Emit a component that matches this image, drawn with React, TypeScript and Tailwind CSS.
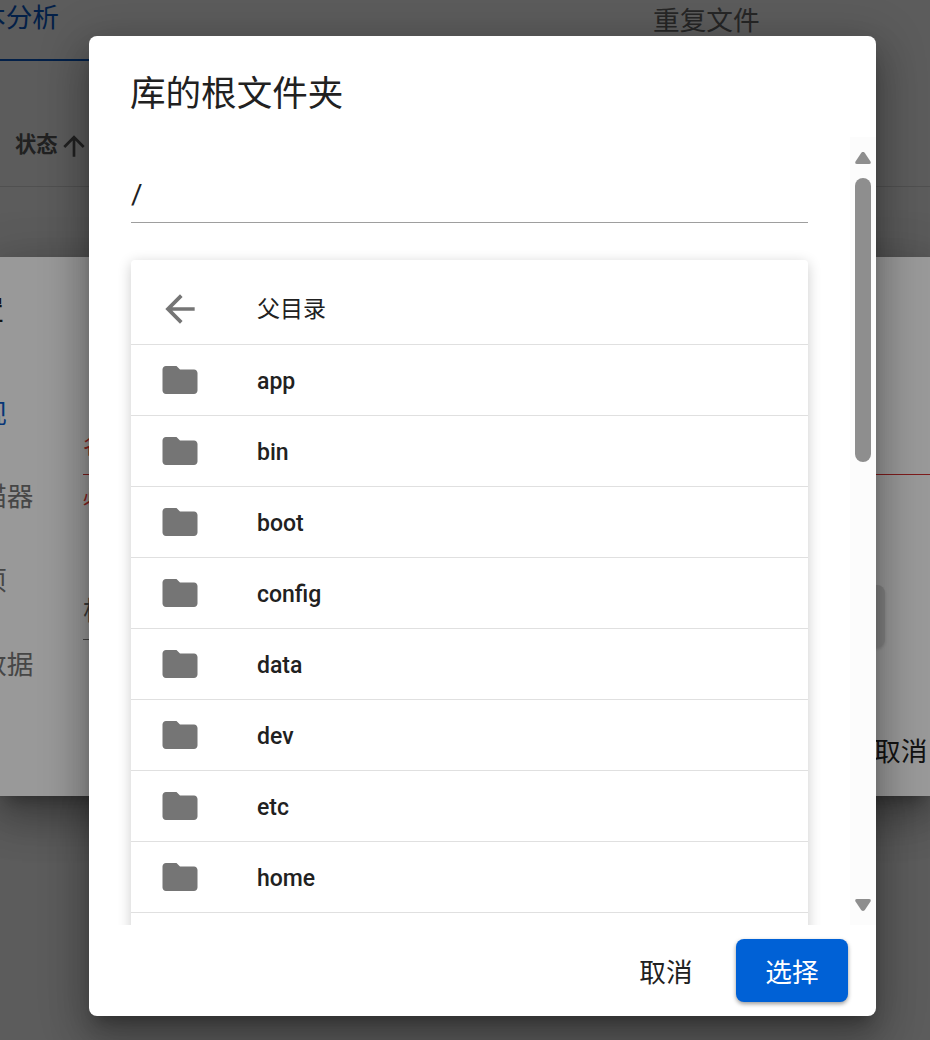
import React from "react";

const FONT = "font-['Roboto','Noto_Sans_CJK_SC',sans-serif]";

function Folder() {
  return (
    <svg width="42" height="42" viewBox="0 0 24 24" fill="#757575">
      <path d="M10 4H4c-1.100 0-2 .9-2 2v12c0 1.100.9 2 2 2h16c1.100 0 2-.9 2-2V8c0-1.100-.9-2-2-2h-8l-2-2z" />
    </svg>
  );
}

function Back() {
  return (
    <svg width="44" height="44" viewBox="0 0 24 24" fill="#757575">
      <path d="M20 11H7.830l5.590-5.590L12 4l-8 8 8 8 1.410-1.410L7.830 13H20v-2z" />
    </svg>
  );
}

const dirs = ["app", "bin", "boot", "config", "data", "dev", "etc", "home", "lib"];
const SHADOW = "shadow-[0_11px_15px_-7px_rgba(0,0,0,0.28),0_24px_38px_3px_rgba(0,0,0,0.2),0_9px_46px_8px_rgba(0,0,0,0.18)]";

export default function App() {
  return (
    <div className={`relative w-[930px] h-[1040px] overflow-hidden bg-white text-[#212121] ${FONT}`}>
      {/* page underneath */}
      <div className="flex h-[61px]">
        <div className="w-[89px] h-[61px] border-b-2 border-[#0a5ac8] text-[#0a5ac8] text-[26.67px] leading-[36px] whitespace-nowrap overflow-hidden flex justify-end pr-[30px]">
          <span className="shrink-0">本分析</span>
        </div>
        <div className="ml-[564px] pt-px text-[26.67px] leading-[40px] text-[#6b6b6b]">重复文件</div>
      </div>
      <div className="h-[126px] border-b border-[#e0e0e0] pl-[15px] pt-[66px] flex items-start font-bold text-[21.33px] leading-[36px] text-[#5c5c5c]">
        <span>状态</span>
        <svg width="32" height="32" viewBox="0 0 24 24" fill="#5c5c5c" className="mt-[3px]">
          <path d="M4 12l1.410 1.410L11 7.830V20h2V7.830l5.580 5.590L20 12l-8-8-8 8z" />
        </svg>
      </div>

      {/* first overlay with settings dialog */}
      <div className="absolute inset-0 bg-black/40">
        <div className={`absolute left-0 top-[257px] w-[930px] h-[539px] bg-white overflow-visible ${SHADOW}`}>
          <div className="absolute -left-[23px] top-[36px] text-[26.67px] leading-[36px] font-bold">置</div>
          <div className="absolute -left-[20px] top-[139px] text-[26.67px] leading-[36px] text-[#0a5ac8]">视</div>
          <div className="absolute -left-[20px] top-[222px] text-[26.67px] leading-[36px] text-[#757575] whitespace-nowrap">描器</div>
          <div className="absolute -left-[20px] top-[306px] text-[26.67px] leading-[36px] text-[#757575]">项</div>
          <div className="absolute -left-[20px] top-[390px] text-[26.67px] leading-[36px] text-[#757575] whitespace-nowrap">数据</div>
          <div className="absolute left-[83px] top-[173px] text-[22px] leading-[32px] text-[#e53935]">名</div>
          <div className="absolute left-[83px] right-0 top-[217px] h-px bg-[#d32f2f]"></div>
          <div className="absolute left-[83px] top-[227px] text-[20px] leading-[28px] text-[#e53935]">必</div>
          <div className="absolute left-[83px] top-[336px] text-[26.67px] leading-[36px] text-[#616161]">根</div>
          <div className="absolute left-[83px] w-[30px] top-[382px] h-px bg-[#757575]"></div>
          <div className="absolute left-[840px] top-[328px] w-[45px] h-[62px] rounded-[8px] bg-[#dcdcdc] shadow-[0_2px_3px_rgba(0,0,0,0.15)]"></div>
          <div className="absolute left-[874px] top-[477px] text-[26.67px] leading-[36px] text-[#212121] whitespace-nowrap">取消</div>
        </div>
      </div>

      {/* second overlay with folder dialog */}
      <div className="absolute inset-0 bg-black/40">
        <div className={`absolute left-[89px] top-[36px] w-[787px] h-[980px] bg-white rounded-[8px] overflow-hidden flex flex-col ${SHADOW}`}>
          <h2 className="h-[101px] shrink-0 pl-[41px] pt-[34px] text-[35.56px] leading-[48px] font-normal text-[#212121]">库的根文件夹</h2>
          <div className="relative h-[788px] shrink-0 overflow-hidden bg-white">
            <div className="pl-[42px] pr-[68px]">
              <div className="h-[86px] pt-[38px] border-b border-[#9e9e9e] text-[28px] leading-[40px] font-normal text-[#212121]">/</div>
              <div className="mt-[37px] rounded-[4px] bg-white shadow-[0_3px_14px_rgba(0,0,0,0.2)]">
                <div className="h-[85px] border-b border-[#e0e0e0] flex items-center pt-[14px]">
                  <div className="w-[126px] pl-[27px] flex"><Back /></div>
                  <span className="text-[23px] leading-[36px] pt-[2px] text-[#212121]">父目录</span>
                </div>
                {dirs.map((d) => (
                  <div key={d} className="h-[71px] border-b border-[#e0e0e0] flex items-center">
                    <div className="w-[126px] pl-[28px] flex"><Folder /></div>
                    <span className="text-[23px] leading-[36px] pt-[4px] font-medium text-[#212121]">{d}</span>
                  </div>
                ))}
              </div>
            </div>
            {/* scrollbar */}
            <div className="absolute right-0 top-0 bottom-0 w-[26px] bg-[#fcfcfc] flex flex-col items-start pl-[5px]">
              <svg width="16" height="12" viewBox="0 0 16 12" className="mt-[15px] shrink-0" fill="#8e8e8e"><path d="M8 0 C9 0 9.500 .5 10 1.200 L15.500 9.500 Q16.500 12 14 12 H2 Q-.5 12 .5 9.500 L6 1.200 C6.500 .5 7 0 8 0 Z" /></svg>
              <div className="mt-[14px] w-[16px] h-[284px] shrink-0 rounded-full bg-[#8e8e8e]"></div>
              <svg width="16" height="12" viewBox="0 0 16 12" className="mt-[437px] shrink-0" fill="#8e8e8e"><path d="M8 12 C9 12 9.500 11.500 10 10.800 L15.500 2.500 Q16.500 0 14 0 H2 Q-.5 0 .5 2.500 L6 10.800 C6.500 11.500 7 12 8 12 Z" /></svg>
            </div>
          </div>
          <div className="flex-1 flex items-start justify-end pr-[28px] pt-[14px] gap-[22px]">
            <button className="w-[96px] h-[63px] pt-[4px] text-[26.67px] font-normal text-[#212121]">取消</button>
            <button className="w-[112px] h-[63px] pt-[4px] rounded-[8px] bg-[#0061d6] text-white text-[26.67px] shadow-[0_2px_4px_rgba(0,0,0,0.4)]">选择</button>
          </div>
        </div>
      </div>
    </div>
  );
}
